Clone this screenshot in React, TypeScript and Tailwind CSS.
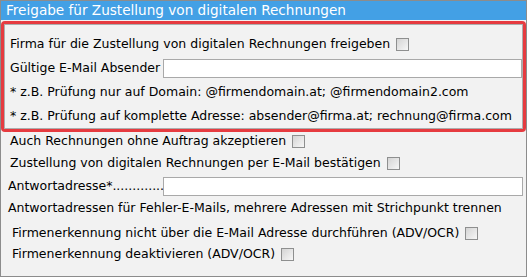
const font = "font-['DejaVu_Sans',Tahoma,sans-serif]";

function Check() {
  return (
    <span className="ml-[6px] inline-block h-[13px] w-[13px] shrink-0 border border-[#8e8f8f] bg-gradient-to-br from-[#d4d4d4] to-[#f7f7f7]" />
  );
}

function TextInput() {
  return (
    <input
      type="text"
      className="h-[19px] flex-1 border border-[#a9a9a9] bg-white outline-none"
    />
  );
}

export default function App() {
  return (
    <div
      className={`${font} flex h-[277px] w-[527px] flex-col border border-[#8c8c8c] bg-[#f2f2f2] text-[12.5px] text-black`}
    >
      {/* Header */}
      <div className="flex h-[19px] shrink-0 items-center bg-[#43a0e5] pb-[1px] pl-[5px] text-[13.6px] text-white">
        Freigabe für Zustellung von digitalen Rechnungen
      </div>

      {/* Highlighted block */}
      <div className="mt-[1px] rounded-[4px] border-[3px] border-[#e63b40]">
        <div className="flex flex-col border border-[#adadad] pt-[7px] pl-[5px]">
          <div className="flex h-[24px] items-center">
            <span>Firma für die Zustellung von digitalen Rechnungen freigeben</span>
            <Check />
          </div>
          <div className="flex h-[24px] items-center">
            <span className="w-[153px] shrink-0">Gültige E-Mail Absender</span>
            <TextInput />
          </div>
          <div className="flex h-[24px] items-center">
            * z.B. Prüfung nur auf Domain: @firmendomain.at; @firmendomain2.com
          </div>
          <div className="flex h-[24px] items-center">
            * z.B. Prüfung auf komplette Adresse: absender@firma.at; rechnung@firma.com
          </div>
        </div>
      </div>

      {/* Other settings */}
      <div className="flex flex-col pr-[3px]">
        <div className="flex h-[19px] items-center pl-[9px]">
          <span>Auch Rechnungen ohne Auftrag akzeptieren</span>
          <Check />
        </div>
        <div className="flex h-[24px] items-center pl-[9px]">
          <span>Zustellung von digitalen Rechnungen per E-Mail bestätigen</span>
          <Check />
        </div>
        <div className="flex h-[22px] items-center pl-[7px]">
          <span className="w-[155px] shrink-0 overflow-hidden whitespace-nowrap">
            Antwortadresse*.............
          </span>
          <TextInput />
        </div>
        <div className="flex h-[23px] items-center pl-[7px]">
          Antwortadressen für Fehler-E-Mails, mehrere Adressen mit Strichpunkt trennen
        </div>
        <div className="flex h-[26px] items-center pl-[11px]">
          <span>Firmenerkennung nicht über die E-Mail Adresse durchführen (ADV/OCR)</span>
          <Check />
        </div>
        <div className="flex h-[17px] items-center pl-[11px]">
          <span>Firmenerkennung deaktivieren (ADV/OCR)</span>
          <Check />
        </div>
      </div>
    </div>
  );
}
